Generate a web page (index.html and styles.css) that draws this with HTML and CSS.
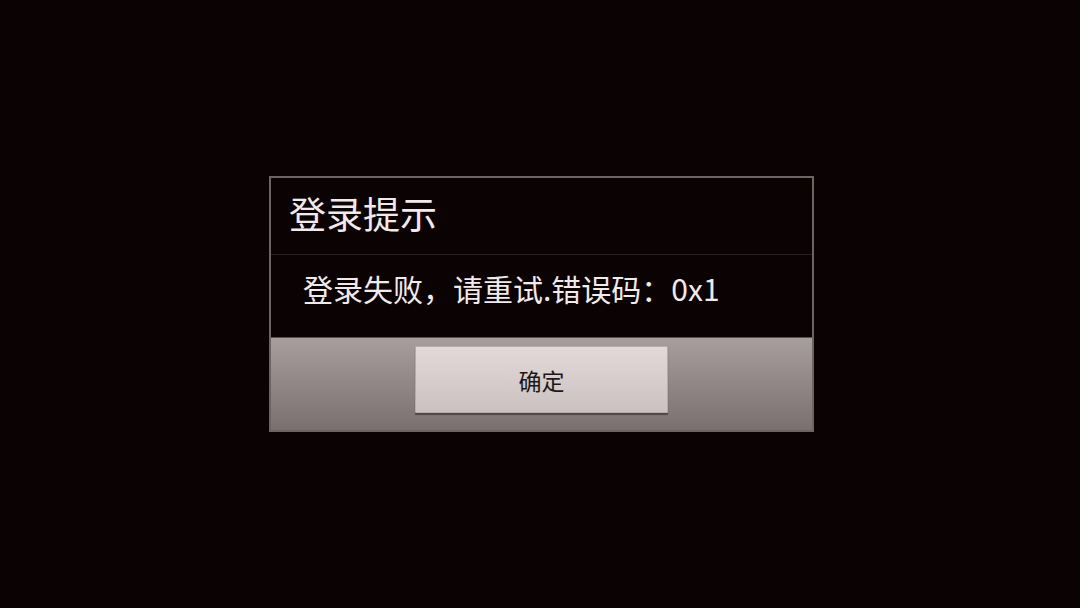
FILE: index.html
```html
<!DOCTYPE html>
<html lang="zh-CN">
<head>
<meta charset="utf-8">
<link rel="stylesheet" href="styles.css">
</head>
<body>
<div class="screen">
  <div class="dialog">
    <div class="title">登录提示</div>
    <div class="message">登录失败，请重试.错误码：0x1</div>
    <div class="actions">
      <button class="btn">确定</button>
    </div>
  </div>
</div>
</body>
</html>
```
FILE: styles.css
```css
html, body {
  margin: 0;
  padding: 0;
  width: 1080px;
  height: 608px;
  background: #0b0204;
  font-family: "Noto Sans CJK SC", "Noto Sans", sans-serif;
}
.screen {
  width: 1080px;
  height: 608px;
  display: flex;
  align-items: center;
  justify-content: center;
}
.dialog {
  width: 541px;
  margin-left: 3px;
  border: 2px solid #6d6363;
  background: #0b0204;
  display: flex;
  flex-direction: column;
}
.title {
  height: 77px;
  box-sizing: border-box;
  display: flex;
  align-items: center;
  padding-left: 18px;
  padding-bottom: 6px;
  font-size: 37px;
  color: #f2eaea;
  border-bottom: 1px solid #2c2022;
}
.message {
  height: 83px;
  display: flex;
  align-items: center;
  padding-left: 32px;
  padding-bottom: 16px;
  box-sizing: border-box;
  font-size: 30px;
  color: #f2eaea;
  border-bottom: 1px solid #5a5050;
}
.actions {
  height: 92px;
  box-sizing: border-box;
  padding-top: 8px;
  display: flex;
  justify-content: center;
  align-items: flex-start;
  background: linear-gradient(to bottom, #a99e9e, #7a7070);
}
.btn {
  width: 253px;
  height: 67px;
  border: 1px solid #b6acac;
  border-radius: 1px;
  background: linear-gradient(to bottom, #e3d9d9, #cbc1c1);
  box-shadow: 0 2px 1px rgba(40, 30, 30, 0.55);
  font-family: "Noto Sans CJK SC", "Noto Sans", sans-serif;
  font-size: 23px;
  color: #1d1717;
  padding: 0;
}
```
